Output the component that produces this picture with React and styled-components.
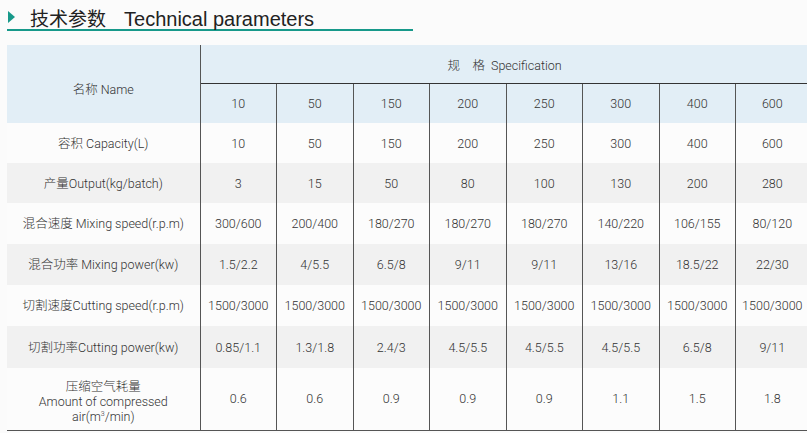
import React from "react"
import styled, { createGlobalStyle } from "styled-components"

const GlobalStyle = createGlobalStyle`
  body {
    margin: 0;
    background: #fbfbfb;
    font-family: Roboto, "Noto Sans CJK SC", sans-serif;
    color: #333;
  }
`

const Page = styled.div`
  width: 807px;
  height: 433px;
  overflow: hidden;
`

const TitleBar = styled.div`
  margin-left: 7px;
  width: 406px;
  height: 31px;
  border-bottom: 2px solid #17998a;
  display: flex;
  align-items: center;
  box-sizing: border-box;
  padding-top: 5px;
`

const Arrow = styled.span`
  width: 0;
  height: 0;
  border-top: 6px solid transparent;
  border-bottom: 6px solid transparent;
  border-left: 7px solid #17998a;
  margin: 0 15px 0 1px;
`

const Title = styled.h2`
  margin: 0;
  font-size: 19px;
  font-weight: 400;
  color: #222;
  font-family: "Liberation Sans", "Noto Sans CJK SC", sans-serif;
  span {
    margin-left: 18px;
    font-size: 20px;
  }
`

const Table = styled.table`
  margin: 14px 0 0 7px;
  width: 800px;
  border-collapse: collapse;
  table-layout: fixed;
  font-size: 12.5px;
  font-weight: 300;
  border-bottom: 1px solid #555;
`

const Head = styled.th`
  background: #e2eef6;
  font-weight: 300;
  text-align: center;
  height: ${p => p.h}px;
  padding: ${p => (p.first ? "8px 0 0" : "0")};
  border-left: ${p => (p.first ? "none" : "1px solid #555")};
  border-top: ${p => (p.top ? "1px solid #333" : "none")};
`

const Row = styled.tr`
  background: ${p => (p.alt ? "#f1f1f1" : "#fcfcfc")};
  height: ${p => p.h}px;
`

const Cell = styled.td`
  text-align: center;
  padding: ${p => (p.tall ? "6px 0 0" : "0")};
  border-left: ${p => (p.first ? "none" : "1px solid #555")};
  line-height: 15px;
`

const Sup = styled.sup`
  font-size: 7px;
  line-height: 0;
  vertical-align: 5px;
`

const specs = ["10", "50", "150", "200", "250", "300", "400", "600"]

const rows = [
  { name: "容积 Capacity(L)", vals: ["10", "50", "150", "200", "250", "300", "400", "600"] },
  { name: "产量Output(kg/batch)", vals: ["3", "15", "50", "80", "100", "130", "200", "280"] },
  { name: "混合速度 Mixing speed(r.p.m)", vals: ["300/600", "200/400", "180/270", "180/270", "180/270", "140/220", "106/155", "80/120"] },
  { name: "混合功率 Mixing power(kw)", vals: ["1.5/2.2", "4/5.5", "6.5/8", "9/11", "9/11", "13/16", "18.5/22", "22/30"] },
  { name: "切割速度Cutting speed(r.p.m)", vals: Array(8).fill("1500/3000") },
  { name: "切割功率Cutting power(kw)", vals: ["0.85/1.1", "1.3/1.8", "2.4/3", "4.5/5.5", "4.5/5.5", "4.5/5.5", "6.5/8", "9/11"] },
]

const heights = [40, 40, 41, 41, 41, 42]

export default function App() {
  return (
    <Page>
      <GlobalStyle />
      <TitleBar>
        <Arrow />
        <Title>技术参数<span>Technical parameters</span></Title>
      </TitleBar>
      <Table>
        <colgroup>
          <col style={{ width: 193 }} />
          {specs.map((s, i) => (
            <col key={i} style={{ width: i === 7 ? 73 : 76.5 }} />
          ))}
        </colgroup>
        <thead>
          <tr>
            <Head first rowSpan={2} h={38}>名称 Name</Head>
            <Head colSpan={8} h={38}>规　格&nbsp; Specification</Head>
          </tr>
          <tr>
            {specs.map((s, i) => (
              <Head key={i} top h={39}>{s}</Head>
            ))}
          </tr>
        </thead>
        <tbody>
          {rows.map((r, i) => (
            <Row key={i} alt={i % 2 === 1} h={heights[i]}>
              <Cell first>{r.name}</Cell>
              {r.vals.map((v, j) => (
                <Cell key={j}>{v}</Cell>
              ))}
            </Row>
          ))}
          <Row h={62}>
            <Cell first tall>
              压缩空气耗量<br />
              Amount of compressed<br />
              air(m<Sup>3</Sup>/min)
            </Cell>
            {["0.6", "0.6", "0.9", "0.9", "0.9", "1.1", "1.5", "1.8"].map((v, j) => (
              <Cell key={j}>{v}</Cell>
            ))}
          </Row>
        </tbody>
      </Table>
    </Page>
  )
}
